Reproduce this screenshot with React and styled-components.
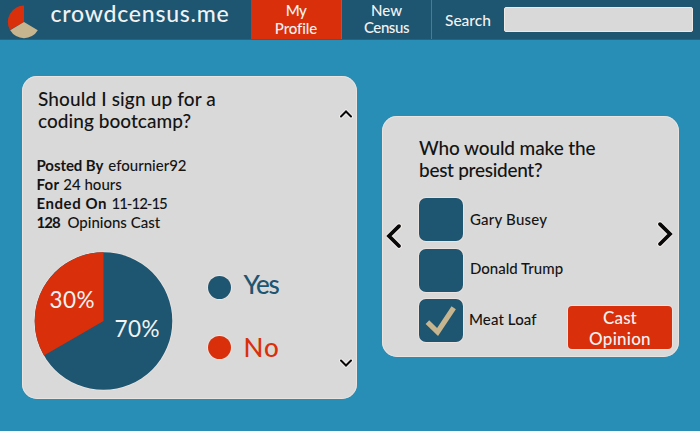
import React from 'react';
import styled, { createGlobalStyle } from 'styled-components';

const navy = '#1e5570';
const red = '#da2f0b';
const grey = '#d9d9d9';
const tan = '#c6b58e';
const halo = 'rgba(240, 230, 224, 0.75)';

const GlobalStyle = createGlobalStyle`
  *, *::before, *::after { box-sizing: border-box; }
  body {
    margin: 0;
    background: #288eb5;
    font-family: Lato, "Open Sans", sans-serif;
    font-weight: 500;
    color: #141414;
    overflow: hidden;
  }
`;

const Page = styled.div`
  width: 700px;
  height: 431px;
  background: #288eb5;
`;

const Header = styled.header`
  display: flex;
  height: 40px;
  background: ${navy};
  border-bottom: 1px solid #1f6585;
  color: #f2f2f2;
`;

const Brand = styled.div`
  display: flex;
  width: 251px;
  padding: 5px 0 0 7px;
`;

const BrandName = styled.span`
  margin: -5px 0 0 11.5px;
  font-size: 23px;
  line-height: 26px;
  letter-spacing: 0.78px;
  white-space: nowrap;
`;

const Tab = styled.a`
  display: flex;
  flex-direction: column;
  align-items: center;
  width: ${(p) => p.$width}px;
  padding-top: ${(p) => p.$top}px;
  background: ${(p) => (p.$active ? red : navy)};
  border-right: 1px solid #2a86aa;
  font-size: 15px;
  line-height: 17.5px;
`;

const Line = styled.span`
  display: block;
  letter-spacing: ${(p) => p.$ls || 0}px;
  white-space: nowrap;
`;

const Search = styled.label`
  display: flex;
  align-items: center;
  padding: 0 0 0 13px;
  font-size: 15.5px;
`;

const SearchField = styled.input`
  width: 189px;
  height: 25px;
  margin-left: 13.5px;
  padding: 0 6px;
  border: 1px solid #eee9e5;
  border-radius: 2px;
  background: ${grey};
  outline: 0;
`;

const Main = styled.main`
  display: flex;
  align-items: flex-start;
  gap: 25px;
  padding: 36px 0 0 22px;
`;

const Card = styled.section`
  display: flex;
  background: ${grey};
  border-radius: 15px;
  box-shadow: inset 0 0 0 1px ${halo};
`;

const ResultCard = styled(Card)`
  width: 335px;
  height: 323px;
`;

const VoteCard = styled(Card)`
  width: 297px;
  height: 241px;
  margin-top: 40px;
`;

const ResultBody = styled.div`
  flex: 1;
  padding: 12px 0 0 12px;
`;

const Question = styled.h2`
  margin: 0;
  padding-left: ${(p) => p.$inset || 0}px;
  font-size: 19px;
  line-height: ${(p) => p.$leading}px;
  font-weight: 500;
`;

const Meta = styled.dl`
  margin: 24px 0 0 2.5px;
  font-size: 15px;
  line-height: 19px;
`;

const MetaRow = styled.div`
  display: flex;
  gap: ${(p) => p.$gap}px;
  white-space: nowrap;
`;

const MetaName = styled.dt`
  font-weight: 700;
  letter-spacing: ${(p) => p.$ls || 0}px;
`;

const MetaValue = styled.dd`
  margin: 0;
  letter-spacing: ${(p) => p.$ls || 0}px;
`;

const Results = styled.div`
  display: flex;
  margin-top: 19px;
`;

const Legend = styled.ul`
  display: flex;
  flex-direction: column;
  gap: 32px;
  margin: 20px 0 0 34px;
  padding: 0;
  list-style: none;
`;

const LegendItem = styled.li`
  display: flex;
  align-items: center;
  gap: 12.5px;
  height: 30px;
  color: ${(p) => p.$color};
  font-size: 26px;
  line-height: 30px;
  letter-spacing: ${(p) => p.$ls}px;
`;

const LegendText = styled.span`
  padding-bottom: ${(p) => p.$lift}px;
`;

const Dot = styled.span`
  width: 23px;
  height: 23px;
  margin-top: ${(p) => p.$drop || 0}px;
  border-radius: 50%;
  background: currentColor;
  box-shadow: 0 0 0 1px ${halo};
`;

const Scroller = styled.div`
  display: flex;
  flex-direction: column;
  justify-content: space-between;
  width: 18px;
  padding: 33px 0 31px;
`;

const Arrow = styled.button`
  display: flex;
  align-self: flex-start;
  padding: 0;
  border: 0;
  background: none;
`;

const SideArrow = styled(Arrow)`
  margin: ${(p) => p.$top}px 0 0 ${(p) => p.$left}px;
`;

const VoteBody = styled.div`
  width: 253px;
  padding: 21px 0 0 17px;
`;

const VoteRow = styled.div`
  display: flex;
  align-items: flex-start;
  margin-top: 18px;
`;

const Options = styled.div`
  display: flex;
  flex-direction: column;
  gap: 7.5px;
  flex: none;
  width: 149px;
`;

const Option = styled.label`
  display: flex;
  align-items: center;
  gap: ${(p) => p.$gap}px;
  font-size: 15px;
`;

const OptionText = styled(Line)`
  padding-bottom: ${(p) => p.$lift}px;
`;

const Box = styled.span`
  display: flex;
  width: 43.5px;
  height: 43px;
  flex: none;
  border-radius: 7px;
  background: ${navy};
  box-shadow: 0 0 0 1px ${halo};
`;

const CastButton = styled.button`
  display: flex;
  flex-direction: column;
  align-items: center;
  flex: none;
  width: 104px;
  height: 43px;
  margin-top: 108px;
  padding: 0.5px 0 0;
  border: 0;
  border-radius: 4px;
  background: ${red};
  box-shadow: 0 0 0 1px ${halo};
  color: #f2f2f2;
  font: 500 17px/21px Lato, "Open Sans", sans-serif;
`;

const PieText = styled.text`
  fill: #f2f2f2;
  font-size: 22.5px;
  font-weight: 400;
  letter-spacing: 0.5px;
`;

const Logo = () => (
  <svg width="32" height="34" viewBox="0 0 32 34">
    <path d="M17 17V.5A16.5 16.5 0 0 0 2.9 25Z" fill={red} />
    <path d="M17 17 3.2 25.3A16 16 0 0 0 30.8 25.3Z" fill={tan} />
  </svg>
);

const Pie = () => (
  <svg width="140" height="140" viewBox="0 0 140 140">
    <circle cx="69.5" cy="70" r="69.6" fill="#eae5e2" />
    <circle cx="69.5" cy="70" r="68.8" fill={navy} />
    <path d="M69.5 70V1.2A68.8 68.8 0 0 0 9.9 104.4Z" fill={red} />
    <PieText x="15.5" y="57">30%</PieText>
    <PieText x="80.5" y="86">70%</PieText>
  </svg>
);

const Chevron = ({ d, w, h, stroke }) => (
  <svg width={w} height={h} viewBox={`0 0 ${w} ${h}`} fill="none">
    <path d={d} stroke="#f0ecea" strokeWidth={stroke + 2} strokeLinecap="round" />
    <path d={d} stroke="#080808" strokeWidth={stroke} strokeLinecap="round" />
  </svg>
);

const Check = () => (
  <svg width="43" height="43" viewBox="0 0 43 43" fill="none">
    <path d="M8.4 23.2 18.6 33 34.7 8.8" stroke={tan} strokeWidth="5.2" strokeLinejoin="miter" />
  </svg>
);

const meta = [
  { name: 'Posted By', value: 'efournier92', gap: 5, ls: -0.07, vls: 0 },
  { name: 'For', value: '24 hours', gap: 4, ls: 0.25, vls: 0 },
  { name: 'Ended On', value: '11-12-15', gap: 4.5, ls: 0.55, vls: -1 },
  { name: '128', value: 'Opinions Cast', gap: 7.5, ls: -0.9, vls: 0 },
];

const options = [
  { text: 'Gary Busey', gap: 7.5, ls: 0.2, lift: 2 },
  { text: 'Donald Trump', gap: 7.5, ls: 0, lift: 4 },
  { text: 'Meat Loaf', gap: 6.5, ls: 0.1, lift: 4, checked: true },
];

export default function App() {
  return (
    <Page>
      <GlobalStyle />
      <Header>
        <Brand>
          <Logo />
          <BrandName>crowdcensus.me</BrandName>
        </Brand>
        <Tab $active $width={91} $top={2}>
          <Line $ls={-0.6}>My</Line>
          <Line $ls={-0.1}>Profile</Line>
        </Tab>
        <Tab $width={90} $top={1.6}>
          <Line>New</Line>
          <Line $ls={-0.4}>Census</Line>
        </Tab>
        <Search>
          Search
          <SearchField />
        </Search>
      </Header>
      <Main>
        <ResultCard>
          <ResultBody>
            <Question $leading={22} $inset={4}>
              <Line $ls={0.14}>Should I sign up for a</Line>
              <Line $ls={0.05}>coding bootcamp?</Line>
            </Question>
            <Meta>
              {meta.map((m) => (
                <MetaRow key={m.name} $gap={m.gap}>
                  <MetaName $ls={m.ls}>{m.name}</MetaName>
                  <MetaValue $ls={m.vls}>{m.value}</MetaValue>
                </MetaRow>
              ))}
            </Meta>
            <Results>
              <Pie />
              <Legend>
                <LegendItem $color={navy} $ls={-1.1}>
                  <Dot $drop={3} />
                  <LegendText $lift={4}>Yes</LegendText>
                </LegendItem>
                <LegendItem $color={red} $ls={1}>
                  <Dot $drop={-1} />
                  <LegendText $lift={3}>No</LegendText>
                </LegendItem>
              </Legend>
            </Results>
          </ResultBody>
          <Scroller>
            <Arrow aria-label="Scroll up">
              <Chevron w={14} h={10} stroke={2} d="M2 7.5 7 2.5 12 7.5" />
            </Arrow>
            <Arrow aria-label="Scroll down">
              <Chevron w={14} h={10} stroke={2} d="M2 2.5 7 7.5 12 2.5" />
            </Arrow>
          </Scroller>
        </ResultCard>
        <VoteCard>
          <SideArrow aria-label="Previous" $top={106} $left={4}>
            <Chevron w={16} h={28} stroke={3.8} d="M13 4.2 3 14 13 24" />
          </SideArrow>
          <VoteBody>
            <Question $leading={21.5}>
              <Line $ls={-0.12}>Who would make the</Line>
              <Line $ls={-0.29}>best president?</Line>
            </Question>
            <VoteRow>
              <Options>
                {options.map((o) => (
                  <Option key={o.text} $gap={o.gap}>
                    <Box>{o.checked && <Check />}</Box>
                    <OptionText $ls={o.ls} $lift={o.lift}>{o.text}</OptionText>
                  </Option>
                ))}
              </Options>
              <CastButton>
                <Line $ls={0.1}>Cast</Line>
                <Line $ls={0.25}>Opinion</Line>
              </CastButton>
            </VoteRow>
          </VoteBody>
          <SideArrow aria-label="Next" $top={104} $left={2}>
            <Chevron w={16} h={28} stroke={3.8} d="M3 4.2 13 14 3 24" />
          </SideArrow>
        </VoteCard>
      </Main>
    </Page>
  );
}
